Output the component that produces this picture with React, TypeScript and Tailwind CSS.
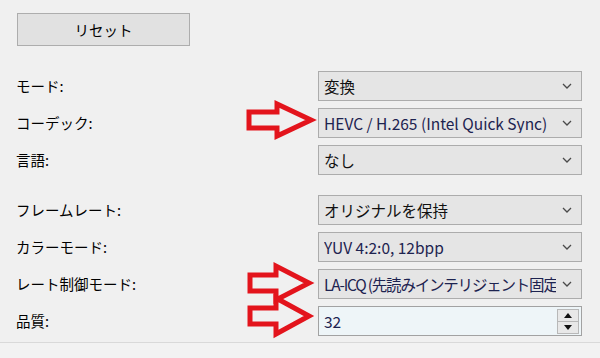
const font = "font-['Noto_Sans_CJK_JP','Noto_Sans',sans-serif]";

function Chevron() {
  return (
    <svg width="10" height="6" viewBox="0 0 10 6" className="shrink-0">
      <path d="M1 1 L5 5 L9 1" fill="none" stroke="#4a4a4a" strokeWidth="1.3" />
    </svg>
  );
}

function Combo({ value, latin = false, tight = false }: { value: string; latin?: boolean; tight?: boolean }) {
  return (
    <div className="flex h-[30px] w-[264px] items-center border border-[#acacac] bg-[#e5e5e5] pl-[5px] pr-[9px]">
      <span
        className={`min-w-0 flex-1 overflow-hidden whitespace-nowrap text-[15.5px] leading-[20px] ${
          latin ? "text-[#1d2350]" : "text-[#111]"
        } ${tight ? "tracking-[-1.2px]" : ""}`}
      >
        {value}
      </span>
      <span className="ml-[6px]">
        <Chevron />
      </span>
    </div>
  );
}

function Spin({ value }: { value: string }) {
  return (
    <div className="flex h-[30px] w-[264px] items-center border border-[#a2a2a2] bg-[#eef5f8] pl-[5px] pr-[2px]">
      <span className="flex-1 text-[15.5px] leading-[20px] text-[#1d2350]">{value}</span>
      <div className="flex h-[25px] w-[22px] flex-col border border-[#b8b8b8] bg-[#e8e8e8]">
        <div className="flex flex-1 items-center justify-center border-b border-[#b8b8b8]">
          <svg width="8" height="5" viewBox="0 0 8 5">
            <path d="M0 5 L4 0 L8 5 Z" fill="#111" />
          </svg>
        </div>
        <div className="flex flex-1 items-center justify-center">
          <svg width="8" height="5" viewBox="0 0 8 5">
            <path d="M0 0 L4 5 L8 0 Z" fill="#111" />
          </svg>
        </div>
      </div>
    </div>
  );
}

function Row({ label, children }: { label: string; children: React.ReactNode }) {
  return (
    <div className="flex h-[30px] items-center">
      <span className="pl-[16px] text-[14.5px] leading-[20px] text-black">{label}</span>
      <div className="ml-auto mr-[18px]">{children}</div>
    </div>
  );
}

function arrow(x0: number, cy: number, half: number, headX: number, headHalf: number, tipX: number) {
  return `M${x0} ${cy - half} L${headX} ${cy - half} L${headX} ${cy - headHalf} L${tipX} ${cy} L${headX} ${
    cy + headHalf
  } L${headX} ${cy + half} L${x0} ${cy + half} Z`;
}

export default function App() {
  return (
    <div className={`relative h-[358px] w-[600px] overflow-hidden bg-[#f0f0f0] ${font}`}>
      <div className="px-[17px] pt-[13px]">
        <button
          type="button"
          className="flex h-[33px] w-[173px] items-center justify-center border border-[#adadad] bg-[#e1e1e1] text-[14.5px] text-black"
        >
          リセット
        </button>
      </div>

      <div className="mt-[25px] flex flex-col gap-[7px]">
        <Row label="モード:">
          <Combo value="変換" />
        </Row>
        <Row label="コーデック:">
          <Combo value="HEVC / H.265 (Intel Quick Sync)" latin />
        </Row>
        <Row label="言語:">
          <Combo value="なし" />
        </Row>
      </div>

      <div className="mt-[20px] flex flex-col gap-[7px]">
        <Row label="フレームレート:">
          <Combo value="オリジナルを保持" />
        </Row>
        <Row label="カラーモード:">
          <Combo value="YUV 4:2:0, 12bpp" latin />
        </Row>
        <Row label="レート制御モード:">
          <Combo value="LA-ICQ (先読みインテリジェント固定品質)" latin tight />
        </Row>
        <Row label="品質:">
          <Spin value="32" />
        </Row>
      </div>

      <div className="mt-[6px] h-[20px] border-t border-[#d9d9d9] bg-[#f2f2f2]" />

      <svg className="pointer-events-none absolute left-0 top-0" width="600" height="358">
        <g fill="none" stroke="#e3141c" strokeWidth="5" strokeLinejoin="miter">
          <path d={arrow(249, 120, 8, 277, 16, 311)} />
          <path d={arrow(250, 283, 8, 276, 17, 309)} />
          <path d={arrow(250, 316, 8, 276, 18, 309)} />
        </g>
      </svg>
    </div>
  );
}
